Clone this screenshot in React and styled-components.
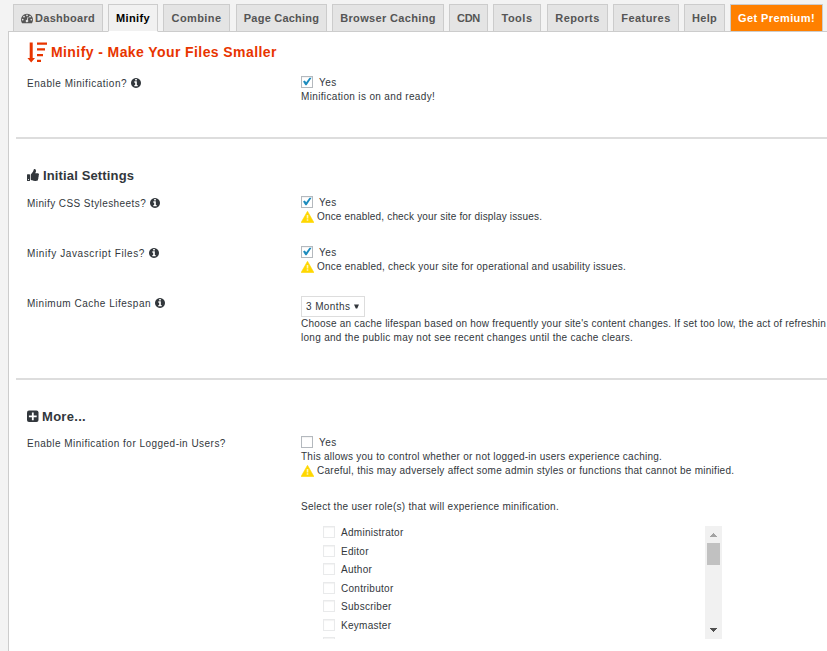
import React from "react";
import styled, { createGlobalStyle, css } from "styled-components";
import { FaThumbsUp } from "react-icons/fa";

const GlobalStyle = createGlobalStyle`
  * { box-sizing: border-box; }
  body {
    margin: 0;
    background: #f3f3f3;
    color: #32373c;
    font: 10px/14px "Liberation Sans", Arial, sans-serif;
    overflow: hidden;
  }
`;

const Page = styled.div`
  height: 651px;
  display: flex;
  flex-direction: column;
  overflow: hidden;
`;

const TabBar = styled.nav`
  display: flex;
  flex: none;
  gap: 5px;
  height: 32px;
  padding: 4px 0 0 13px;
`;

const Tab = styled.a`
  flex: none;
  display: flex;
  align-items: center;
  justify-content: center;
  gap: 2px;
  width: ${(p) => p.$width}px;
  margin-left: ${(p) => p.$nudge || 0}px;
  height: 28px;
  border: 1px solid #ccc;
  background: #e4e4e4;
  color: #555;
  font-size: 11px;
  font-weight: 700;
  letter-spacing: ${(p) => p.$track || 0}px;
  white-space: nowrap;
  z-index: 1;

  ${(p) =>
    p.$kind === "active" &&
    css`
      background: #f1f1f1;
      border-bottom-color: #fff;
      color: #000;
    `}
  ${(p) =>
    p.$kind === "premium" &&
    css`
      background: #ff8000;
      color: #fff;
    `}
`;

const Panel = styled.main`
  flex: 1;
  min-height: 0;
  margin: -1px 0 0 8px;
  padding: 0 0 0 7px;
  background: #fff;
  border: 1px solid #ccc;
  border-width: 1px 0 0 1px;
  overflow: hidden;
`;

const Section = styled.section`
  height: ${(p) => p.$height}px;
  padding-left: 11px;
  border-bottom: ${(p) => (p.$last ? 0 : 2)}px solid #ddd;
`;

const Title = styled.h1`
  display: flex;
  align-items: center;
  gap: 4px;
  height: 43px;
  margin: 0;
  padding-bottom: 3px;
  color: #e83500;
  font-size: 14px;
  letter-spacing: 0.41px;
  white-space: nowrap;
`;

const Heading = styled.h2`
  display: flex;
  align-items: center;
  gap: ${(p) => p.$gap || 4}px;
  height: ${(p) => p.$height || 56}px;
  margin: 0;
  padding-top: 16px;
  font-size: 13px;
  letter-spacing: ${(p) => p.$track}px;
`;

const Row = styled.div`
  display: grid;
  grid-template-columns: 274px 526px;
  height: ${(p) => p.$height || 50}px;
`;

const Label = styled.div`
  display: flex;
  align-items: center;
  gap: 4px;
  height: 15px;
  margin-top: 1px;
  letter-spacing: ${(p) => p.$track}px;
  white-space: nowrap;
`;

const Field = styled.div`
  min-width: 0;
`;

const Option = styled.label`
  display: flex;
  align-items: center;
  gap: 6px;
  height: 14px;
  margin-bottom: 1px;
  letter-spacing: ${(p) => p.$track ?? 0.5}px;
`;

/* Text that sits one pixel below the centre of the icon before it. */
const Lowered = styled.span`
  padding-top: 2px;
`;

const Box = styled.span`
  flex: none;
  display: flex;
  width: 12px;
  height: 12px;
  border: 1px solid ${(p) => (p.$faint ? "#e9eaeb" : "#b4b9be")};
  background: #fff;
  box-shadow: inset 0 1px 1px #f3f3f3;
`;

const Hint = styled.div`
  display: flex;
  align-items: center;
  gap: 3px;
  height: 14px;
  letter-spacing: ${(p) => p.$track || 0}px;
  white-space: nowrap;
`;

const Select = styled.div`
  display: flex;
  align-items: center;
  gap: 4px;
  width: 64px;
  height: 21px;
  margin-top: 1px;
  padding-left: 4px;
  border: 1px solid #ddd;
  letter-spacing: 0.4px;
`;

const Roles = styled.div`
  display: flex;
  justify-content: space-between;
  width: 421px;
  height: 113px;
  margin-top: 12px;
  padding-left: 22px;
  overflow: hidden;
`;

const RoleList = styled.div`
  display: flex;
  flex-direction: column;
`;

const Role = styled(Option)`
  flex: none;
  height: 18.5px;
  margin: 0;
  padding-bottom: 6px;
`;

const ScrollTrack = styled.div`
  display: flex;
  flex-direction: column;
  align-items: center;
  width: 17px;
  height: 113px;
  background: #f1f1f1;
`;

const ScrollThumb = styled.div`
  width: 13px;
  height: 22px;
  margin-bottom: auto;
  background: #c1c1c1;
`;

const Spacer = styled.div`
  height: 22px;
`;

const Icon = styled.svg`
  flex: none;
  fill: currentColor;
`;

const InfoSvg = styled(Icon)`
  margin-bottom: 1px;
`;

const Warning = () => (
  <Icon width="13" height="12">
    <path d="M6.5 0.3L12.9 11.5H0.1z" fill="#ffd700" stroke="#ffd700" strokeWidth="0.6" strokeLinejoin="round" />
    <path d="M5.7 4h1.6v3.4H5.7zM5.7 8.3h1.6v1.5H5.7z" fill="#fff6b8" />
  </Icon>
);

const Info = () => (
  <InfoSvg width="10" height="10" viewBox="128 128 1536 1536">
    <path d="M1152 1376v-160q0-14-9-23t-23-9h-96v-512q0-14-9-23t-23-9h-320q-14 0-23 9t-9 23v160q0 14 9 23t23 9h96v320h-96q-14 0-23 9t-9 23v160q0 14 9 23t23 9h448q14 0 23-9t9-23zm-128-896v-160q0-14-9-23t-23-9h-192q-14 0-23 9t-9 23v160q0 14 9 23t23 9h192q14 0 23-9t9-23zm640 416q0 209-103 385.5t-279.5 279.5-385.5 103-385.5-103-279.5-279.5-103-385.5 103-385.5 279.5-279.5 385.5-103 385.5 103 279.5 279.5 103 385.5z" />
  </InfoSvg>
);

const Gauge = () => (
  <Icon width="12" height="12" viewBox="0 0 1792 1792">
    <path d="M384 1152q0-53-37.5-90.5t-90.5-37.5-90.5 37.5-37.5 90.5 37.5 90.5 90.5 37.5 90.5-37.5 37.5-90.5zm192-448q0-53-37.5-90.5t-90.5-37.5-90.5 37.5-37.5 90.5 37.5 90.5 90.5 37.5 90.5-37.5 37.5-90.5zm428 481l101-382q6-26-7.5-48.5t-38.5-29.5-48 6.5-30 39.5l-101 382q-60 5-107 43.5t-63 98.5q-20 77 20 146t117 89 146-20 89-117q16-60-6-117t-72-91zm660-33q0-53-37.5-90.5t-90.5-37.5-90.5 37.5-37.5 90.5 37.5 90.5 90.5 37.5 90.5-37.5 37.5-90.5zm-640-640q0-53-37.5-90.5t-90.5-37.5-90.5 37.5-37.5 90.5 37.5 90.5 90.5 37.5 90.5-37.5 37.5-90.5zm448 192q0-53-37.5-90.5t-90.5-37.5-90.5 37.5-37.5 90.5 37.5 90.5 90.5 37.5 90.5-37.5 37.5-90.5zm320 448q0 261-141 483-19 29-54 29h-1402q-35 0-54-29-141-221-141-483 0-182 71-348t191-286 286-191 348-71 348 71 286 191 191 286 71 348z" />
  </Icon>
);

const Plus = () => (
  <Icon width="12" height="12">
    <rect x="0" y="0.5" width="11.5" height="11.5" rx="2" />
    <path d="M4.9 2.5h1.8v3h3v1.8h-3v3H4.9v-3h-3V5.5h3z" fill="#fff" />
  </Icon>
);

const ScrollArrow = ({ down }) => (
  <svg width="17" height="17" shapeRendering="crispEdges">
    <path
      d={down ? "M5 6h7v1h-1v1h-1v1h-1v1h-1v-1h-1v-1h-1v-1h-1z" : "M5 11h7v-1h-1v-1h-1v-1h-1v-1h-1v1h-1v1h-1v1h-1z"}
      fill={down ? "#505050" : "#a3a3a3"}
    />
  </svg>
);

const SortIcon = () => (
  <Icon width="20" height="21">
    <path d="M2.7 0.5h3v15.5h2.3L4.2 20.5 0.4 16h2.3z" />
    <path d="M10 0.5h10v2.2H10zM10 6.3h8v2.2h-8zM10 12h6v2.2h-6zM10 17.7h4v2.2h-4z" />
  </Icon>
);

const Check = ({ on, faint }) => (
  <Box $faint={faint}>
    {on && (
      <svg width="10" height="10">
        <path d="M1 4.4L2.8 3.4 4.2 5.3 7.5 0.8 9.6 0.8 4.6 8.2H3.4z" fill="#1e8cbe" />
      </svg>
    )}
  </Box>
);

const TABS = [
  { text: "Dashboard", width: 90, icon: true, track: 0.27 },
  { text: "Minify", width: 50, track: 0.35, kind: "active" },
  { text: "Combine", width: 67, track: 0.4 },
  { text: "Page Caching", width: 91, track: 0.22, nudge: 1 },
  { text: "Browser Caching", width: 112, track: 0.35 },
  { text: "CDN", width: 39, track: -0.3 },
  { text: "Tools", width: 48, track: 0.5 },
  { text: "Reports", width: 61, track: 0.4, nudge: 1 },
  { text: "Features", width: 66, track: 0.45 },
  { text: "Help", width: 41, track: 0.25 },
  { text: "Get Premium!", width: 93, track: 0.4, kind: "premium" },
];

const ROLES = ["Administrator", "Editor", "Author", "Contributor", "Subscriber", "Keymaster", ""];

export default function App() {
  return (
    <Page>
      <GlobalStyle />
      <TabBar>
        {TABS.map((t) => (
          <Tab key={t.text} $width={t.width} $track={t.track} $kind={t.kind} $nudge={t.nudge}>
            {t.icon && <Gauge />}
            {t.text}
          </Tab>
        ))}
      </TabBar>
      <Panel>
        <Section $height={107}>
          <Title><SortIcon />Minify - Make Your Files Smaller</Title>
          <Row>
            <Label $track={0.53}>Enable Minification? <Info /></Label>
            <Field>
              <Option><Check on /><Lowered>Yes</Lowered></Option>
              <Hint $track={0.35}>Minification is on and ready!</Hint>
            </Field>
          </Row>
        </Section>
        <Section $height={241}>
          <Heading $track={0.14}><FaThumbsUp size={12} /><Lowered>Initial Settings</Lowered></Heading>
          <Row>
            <Label $track={0.42}>Minify CSS Stylesheets? <Info /></Label>
            <Field>
              <Option><Check on /><Lowered>Yes</Lowered></Option>
              <Hint $track={0.17}><Warning />Once enabled, check your site for display issues.</Hint>
            </Field>
          </Row>
          <Row>
            <Label $track={0.61}>Minify Javascript Files? <Info /></Label>
            <Field>
              <Option><Check on /><Lowered>Yes</Lowered></Option>
              <Hint $track={0.23}><Warning />Once enabled, check your site for operational and usability issues.</Hint>
            </Field>
          </Row>
          <Row>
            <Label $track={0.51}>Minimum Cache Lifespan <Info /></Label>
            <Field>
              <Select>
                3 Months
                <Icon width="5" height="5"><path d="M0 0.5h5L3.2 4.5H1.8z" /></Icon>
              </Select>
              <Hint $track={0.22}>Choose an cache lifespan based on how frequently your site's content changes. If set too low, the act of refreshin</Hint>
              <Hint $track={0.29}>long and the public may not see recent changes until the cache clears.</Hint>
            </Field>
          </Row>
        </Section>
        <Section $height={271} $last>
          <Heading $track={0.3} $gap={3} $height={55}><Plus /><Lowered>More...</Lowered></Heading>
          <Row $height={215}>
            <Label $track={0.47}>Enable Minification for Logged-in Users?</Label>
            <Field>
              <Option><Check /><Lowered>Yes</Lowered></Option>
              <Hint $track={0.25}>This allows you to control whether or not logged-in users experience caching.</Hint>
              <Hint $track={0.26}><Warning />Careful, this may adversely affect some admin styles or functions that cannot be minified.</Hint>
              <Spacer />
              <Hint $track={0.29}>Select the user role(s) that will experience minification.</Hint>
              <Roles>
                <RoleList>
                  {ROLES.map((r) => (
                    <Role key={r} $track={0.28}><Check faint /><Lowered>{r}</Lowered></Role>
                  ))}
                </RoleList>
                <ScrollTrack>
                  <ScrollArrow />
                  <ScrollThumb />
                  <ScrollArrow down />
                </ScrollTrack>
              </Roles>
            </Field>
          </Row>
        </Section>
      </Panel>
    </Page>
  );
}
